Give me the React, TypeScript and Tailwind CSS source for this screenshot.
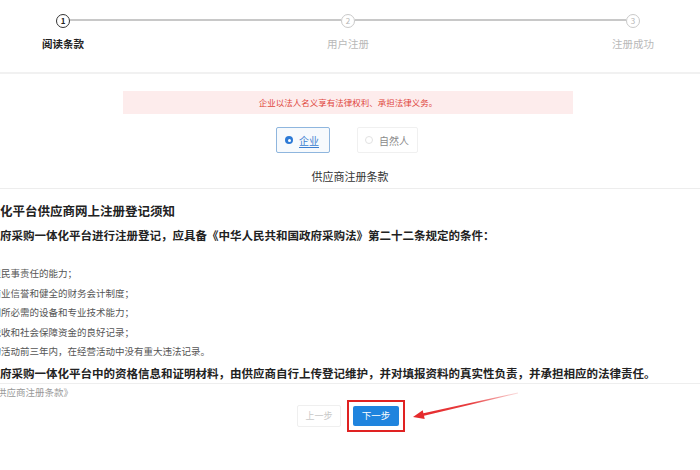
import React from "react";

// Steps of the supplier registration wizard
const steps = [
  { no: 1, label: "阅读条款", active: true },
  { no: 2, label: "用户注册", active: false },
  { no: 3, label: "注册成功", active: false },
];

// Conditions listed in the notice (the screenshot cuts off the left side)
const conditions = [
  "（一）具有独立承担民事责任的能力；",
  "（二）具有良好的商业信誉和健全的财务会计制度；",
  "（三）具有履行合同所必需的设备和专业技术能力；",
  "（四）有依法缴纳税收和社会保障资金的良好记录；",
  "（五）参加政府采购活动前三年内，在经营活动中没有重大违法记录。",
];

const StepCircle: React.FC<{ no: number; active: boolean }> = ({ no, active }) => (
  <div
    className={`w-[14px] h-[14px] rounded-full flex items-center justify-center text-[8px] leading-none ${
      active
        ? "border-[1.5px] border-[#333] text-[#222] font-bold"
        : "border border-[#c9c9c9] text-[#b5b5b5]"
    }`}
  >
    {no}
  </div>
);

const App: React.FC = () => {
  return (
    <div className="relative w-[700px] h-[470px] overflow-hidden bg-white font-['Noto_Sans_CJK_SC',sans-serif]">
      {/* Stepper */}
      <div className="flex items-center pt-[14px] pl-[56px] pr-[60px]">
        <StepCircle no={1} active />
        <div className="flex-1 h-[1.5px] bg-[#c8c8c8] -mt-[2px]" />
        <StepCircle no={2} active={false} />
        <div className="flex-1 h-[1.5px] bg-[#c8c8c8] -mt-[2px]" />
        <StepCircle no={3} active={false} />
      </div>
      <div className="flex justify-between pl-[23px] pr-[27px] mt-[9px]">
        {steps.map((s) => (
          <div
            key={s.no}
            className={`w-[80px] text-center text-[10.5px] leading-[14px] ${
              s.active ? "text-[#222] font-bold" : "text-[#b8b8b8]"
            }`}
          >
            {s.label}
          </div>
        ))}
      </div>
      <div className="mt-[21px] h-[2px] bg-[#f1f1f1]" />

      {/* Notice bar */}
      <div className="mt-[17px] ml-[123px] w-[450px] h-[23px] bg-[#fdecec] flex items-center justify-center text-[8.5px] text-[#e0463c]">
        企业以法人名义享有法律权利、承担法律义务。
      </div>

      {/* Supplier type */}
      <div className="mt-[13px] flex justify-center gap-[27px] pr-[6px]">
        <label className="w-[54px] h-[26px] border border-[#8fb6de] rounded-[2px] bg-[#f7fafd] flex items-center pl-[8px] gap-[6px]">
          <span className="w-[8px] h-[8px] rounded-full bg-[#2d7ad6] flex items-center justify-center">
            <span className="w-[3px] h-[3px] rounded-full bg-white" />
          </span>
          <span className="text-[10px] text-[#3d7fd0] underline underline-offset-2">企业</span>
        </label>
        <label className="w-[61px] h-[26px] border border-[#f0f0f0] rounded-[2px] flex items-center pl-[7px] gap-[6px]">
          <span className="w-[8px] h-[8px] rounded-full border border-[#e2e2e2]" />
          <span className="text-[10px] text-[#8a8a8a]">自然人</span>
        </label>
      </div>

      <div className="mt-[16px] text-center text-[11px] leading-[14px] text-[#333]">供应商注册条款</div>
      <div className="mt-[5px] h-px bg-[#ededed]" />

      {/* Terms body */}
      <div className="overflow-hidden whitespace-nowrap">
        <div className="mt-[13px] -ml-[75px] text-[12.5px] leading-[18px] font-bold text-[#222]">
          政府采购一体化平台供应商网上注册登记须知
        </div>
        <div className="mt-[6px] -ml-[80.5px] text-[11.5px] leading-[18px] font-bold text-[#222]">
          一、供应商在政府采购一体化平台进行注册登记，应具备《中华人民共和国政府采购法》第二十二条规定的条件：
        </div>
        <div className="mt-[20px] -ml-[84.5px]">
          {conditions.map((c) => (
            <div key={c} className="h-[19.5px] leading-[19.5px] text-[9.5px] text-[#555]">
              {c}
            </div>
          ))}
        </div>
        <div className="mt-[2px] -ml-[80.5px] text-[11.5px] leading-[18px] font-bold text-[#222]">
          二、供应商在政府采购一体化平台中的资格信息和证明材料，由供应商自行上传登记维护，并对填报资料的真实性负责，并承担相应的法律责任。
        </div>
      </div>
      <div className="mt-px h-px bg-[#eeeeee]" />
      <div className="mt-[2px] overflow-hidden whitespace-nowrap">
        <div className="-ml-[79px] text-[9.5px] leading-[12px] text-[#999]">我已阅读并同意《供应商注册条款》</div>
      </div>

      {/* Actions */}
      <div className="mt-[2px] flex items-center justify-center gap-[6px] pl-[2px]">
        <button className="w-[44px] h-[22px] border border-[#efefef] rounded-[2px] text-[9px] text-[#c8c8c8]">
          上一步
        </button>
        <span className="p-[4px] border-2 border-[#e02222]">
          <button className="block w-[46px] h-[20px] rounded-[2px] bg-[#1f84de] text-[9.5px] text-white">
            下一步
          </button>
        </span>
      </div>

      {/* Annotation arrow */}
      <svg className="absolute inset-0 pointer-events-none" width="700" height="470" viewBox="0 0 700 470">
        <defs>
          <linearGradient id="arrowFade" x1="518" y1="393" x2="413" y2="417" gradientUnits="userSpaceOnUse">
            <stop offset="0" stopColor="#e5282a" stopOpacity="0.15" />
            <stop offset="0.45" stopColor="#e5282a" stopOpacity="0.9" />
            <stop offset="1" stopColor="#e5282a" />
          </linearGradient>
        </defs>
        <polygon
          points="413,417 424.7,418.9 424,415.8 518.1,393.4 517.9,392.6 423.4,413.3 422.7,410.2"
          fill="url(#arrowFade)"
        />
      </svg>
    </div>
  );
};

export default App;
